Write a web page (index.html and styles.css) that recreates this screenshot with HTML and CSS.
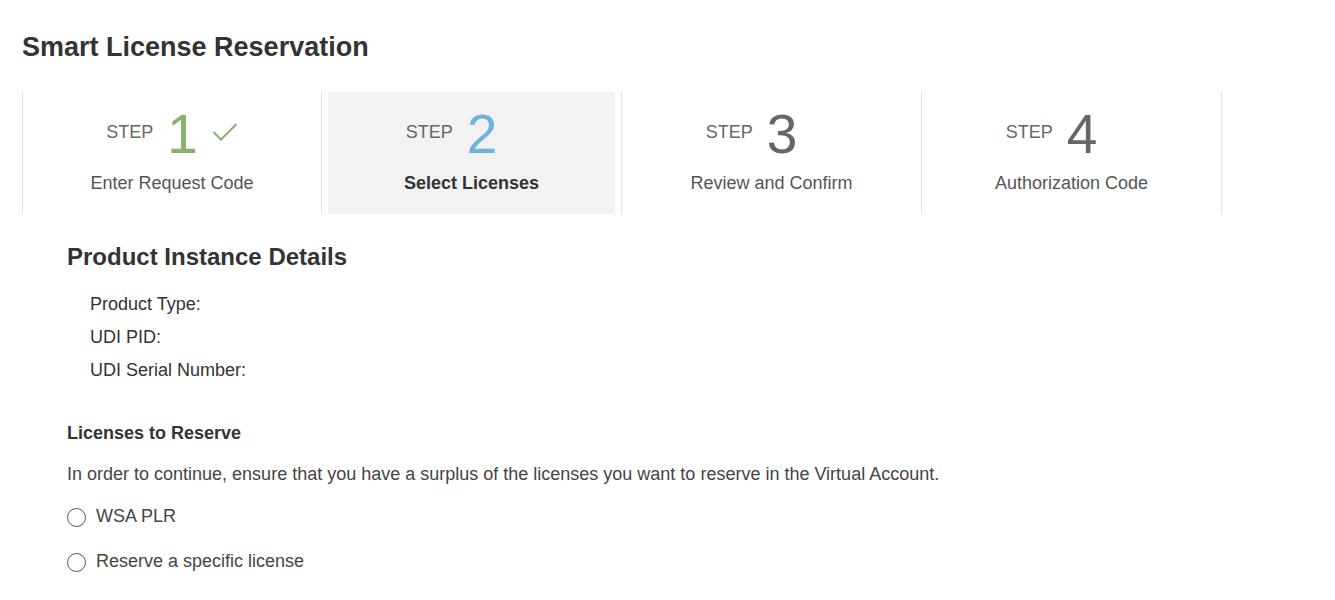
FILE: index.html
```html
<!DOCTYPE html>
<html>
<head>
	<meta charset="utf-8">
	<title>Smart License Reservation</title>
	<link rel="stylesheet" href="styles.css">
</head>
<body>
	<div class="page">
		<h1 class="title">Smart License Reservation</h1>

		<div class="steps">
			<div class="step done">
				<div class="step-inner">
					<div class="step-head">
						<span class="step-word">STEP</span>
						<span class="step-num">1</span>
						<span class="step-check">
							<svg width="26" height="18" viewBox="0 0 26 18"><path d="M1.5 9 L9 16.5 L24.5 1" fill="none" stroke="#86b36a" stroke-width="2"/></svg>
						</span>
					</div>
					<div class="step-label">Enter Request Code</div>
				</div>
			</div>
			<div class="step active">
				<div class="step-inner">
					<div class="step-head">
						<span class="step-word">STEP</span>
						<span class="step-num">2</span>
						<span class="step-check"></span>
					</div>
					<div class="step-label">Select Licenses</div>
				</div>
			</div>
			<div class="step">
				<div class="step-inner">
					<div class="step-head">
						<span class="step-word">STEP</span>
						<span class="step-num">3</span>
						<span class="step-check"></span>
					</div>
					<div class="step-label">Review and Confirm</div>
				</div>
			</div>
			<div class="step last">
				<div class="step-inner">
					<div class="step-head">
						<span class="step-word">STEP</span>
						<span class="step-num">4</span>
						<span class="step-check"></span>
					</div>
					<div class="step-label">Authorization Code</div>
				</div>
			</div>
		</div>

		<div class="content">
			<h2 class="section-title">Product Instance Details</h2>
			<ul class="details">
				<li>Product Type:</li>
				<li>UDI PID:</li>
				<li>UDI Serial Number:</li>
			</ul>

			<h3 class="sub-title">Licenses to Reserve</h3>
			<p class="note">In order to continue, ensure that you have a surplus of the licenses you want to reserve in the Virtual Account.</p>

			<label class="radio"><span class="radio-dot"></span>WSA PLR</label>
			<label class="radio"><span class="radio-dot"></span>Reserve a specific license</label>
		</div>
	</div>
</body>
</html>
```

FILE: styles.css
```css
body{
	margin: 0;
	font-family: "Liberation Sans", Arial, sans-serif;
	color: #333;
	background: #fff;
}
.page{
	padding: 0 22px;
}
.title{
	margin: 0;
	padding-top: 31px;
	font-size: 27px;
	font-weight: bold;
	color: #333;
	line-height: 32px;
}

/* wizard steps */
.steps{
	display: flex;
	margin-top: 29px;
	height: 122px;
}
.step{
	box-sizing: border-box;
	width: 300px;
	border-left: 1px solid #e2e2e2;
	padding: 0 6px;
}
.step:first-child{
	width: 299px;
}
.step.last{
	border-right: 1px solid #e2e2e2;
	width: 301px;
}
.step-inner{
	height: 100%;
	display: flex;
	flex-direction: column;
	align-items: center;
}
.step.active .step-inner{
	background: #f2f2f2;
}
.step-head{
	display: flex;
	align-items: center;
	height: 62px;
	margin-top: 11px;
}
.step-word{
	font-size: 18px;
	color: #666;
	margin-top: -3px;
}
.step-num{
	font-size: 55px;
	color: #666;
	margin-left: 14px;
	line-height: 56px;
}
.step.done .step-num{
	color: #86b36a;
}
.step.active .step-num{
	color: #6cb4dc;
}
.step-check{
	width: 26px;
	height: 18px;
	margin-left: 14px;
	margin-top: -4px;
}
.step-label{
	font-size: 18px;
	color: #555;
	margin-top: 8px;
}
.step.active .step-label{
	font-weight: bold;
	color: #333;
}

/* form content */
.content{
	padding-left: 45px;
}
.section-title{
	margin: 29px 0 0;
	font-size: 24px;
	line-height: 28px;
	color: #333;
}
.details{
	list-style: none;
	margin: 17px 0 0;
	padding-left: 23px;
}
.details li{
	font-size: 18px;
	line-height: 33px;
	color: #333;
}
.sub-title{
	margin: 35px 0 0;
	font-size: 18px;
	line-height: 22px;
	color: #333;
}
.note{
	margin: 19px 0 0;
	font-size: 18px;
	line-height: 22px;
	color: #444;
}
.radio{
	display: flex;
	align-items: center;
	font-size: 18px;
	color: #444;
	margin-top: 20px;
	height: 22px;
}
.radio + .radio{
	margin-top: 23px;
}
.radio-dot{
	box-sizing: border-box;
	width: 19px;
	height: 19px;
	border: 1.5px solid #555;
	border-radius: 50%;
	margin-right: 10px;
	margin-top: 2px;
}
```
